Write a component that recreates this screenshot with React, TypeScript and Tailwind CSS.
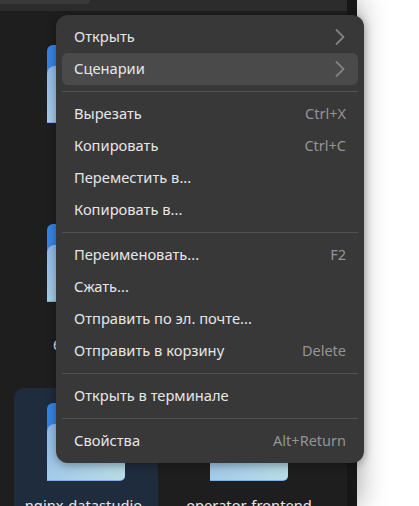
import { ChevronRight } from 'lucide-react';

type Item = { label: string; hint?: string; arrow?: boolean; active?: boolean };

const groups: Item[][] = [
  [{ label: 'Открыть', arrow: true }, { label: 'Сценарии', arrow: true, active: true }],
  [
    { label: 'Вырезать', hint: 'Ctrl+X' },
    { label: 'Копировать', hint: 'Ctrl+C' },
    { label: 'Переместить в...' },
    { label: 'Копировать в...' },
  ],
  [
    { label: 'Переименовать...', hint: 'F2' },
    { label: 'Сжать...' },
    { label: 'Отправить по эл. почте...' },
    { label: 'Отправить в корзину', hint: 'Delete' },
  ],
  [{ label: 'Открыть в терминале' }],
  [{ label: 'Свойства', hint: 'Alt+Return' }],
];

function Folder() {
  return (
    <div className="relative h-[78px] w-[78px] overflow-hidden rounded-t-[6px] rounded-br-[5px] bg-[#3584e4]">
      <div className="absolute inset-x-0 top-[21px] bottom-0 rounded-tl-[8px] rounded-br-[5px] border-b border-[#7fb0ea] bg-gradient-to-br from-[#8fb8e8] to-[#b9dde4]" />
    </div>
  );
}

function MenuRow({ item }: { item: Item }) {
  return (
    <div
      className={`flex h-8 items-center justify-between rounded-[6px] px-3 ${
        item.active ? 'bg-[#4a4a4a]' : ''
      }`}
    >
      <span className="-mt-[2px] text-[14.7px] leading-5 text-[#e6e6e6]">{item.label}</span>
      {item.hint && <span className="text-[14.5px] text-[#949494]">{item.hint}</span>}
      {item.arrow && <ChevronRight size={28} strokeWidth={1.6} className="-mr-2 text-[#808080]" />}
    </div>
  );
}

export default function App() {
  return (
    <div className="relative h-[506px] w-[419px] overflow-hidden bg-white font-['Noto_Sans','Open_Sans',sans-serif]">
      {/* file manager window behind the menu */}
      <div className="flex h-full w-[357px] shadow-[0_0_28px_rgba(0,0,0,0.4)]">
        <div className="flex w-[347px] flex-col bg-[#1e1e1e]">
          <div className="h-[11px] shrink-0 bg-[#2c2c2c]">
            <div className="h-[4px] w-[90px] rounded-br-[6px] bg-[#3a3a3a]" />
          </div>
          <div className="flex w-[144px] flex-col pt-[34px] pl-[47px]">
            <Folder />
            <div className="mt-[101px]">
              <Folder />
            </div>
            <span className="mt-[32px] mb-[2px] pl-[6px] text-[14.7px] leading-5 text-[#e6e6e6]">6</span>
          </div>
          <div className="mt-[32px] grid grid-cols-[144px_144px] gap-x-[19px] pl-[14px]">
            <div className="flex h-[130px] flex-col items-center rounded-t-[10px] bg-[#1f2c3d] pt-[15px]">
              <Folder />
              <span className="mt-[14px] -ml-[5px] text-[14.7px] leading-5 text-[#e6e6e6]">nginx-datastudio</span>
            </div>
            <div className="flex flex-col items-center pt-[15px]">
              <Folder />
              <span className="mt-[14px] text-[14.7px] leading-5 text-[#e6e6e6]">operator-frontend</span>
            </div>
          </div>
        </div>
        <div className="w-[10px] bg-[#171717]" />
      </div>

      {/* context menu */}
      <div className="absolute top-[15px] left-[56px] w-[308px] rounded-[12px] bg-[#383838] p-[6px] shadow-[0_2px_10px_rgba(0,0,0,0.35)]">
        {groups.map((group, i) => (
          <div key={i}>
            {i > 0 && <div className="my-[6px] h-px bg-[#525252]" />}
            {group.map((item) => (
              <MenuRow key={item.label} item={item} />
            ))}
          </div>
        ))}
      </div>
    </div>
  );
}
